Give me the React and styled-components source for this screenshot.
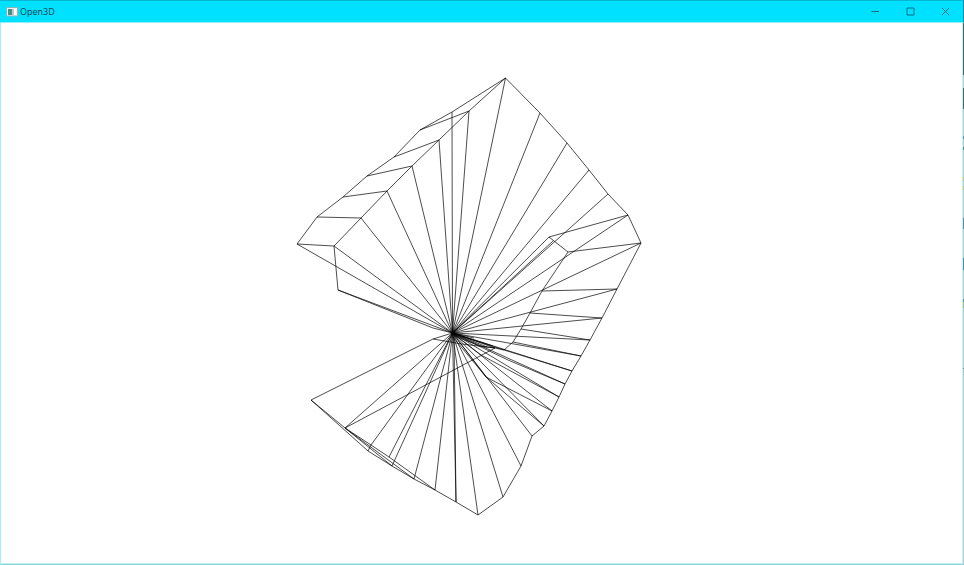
import React from "react";
import styled, { createGlobalStyle } from "styled-components";

const GlobalStyle = createGlobalStyle`
  *, *::before, *::after { box-sizing: border-box; }
  html, body, #root { height: 100%; margin: 0; }
  body { background: #ffffff; font-family: "Open Sans", "Noto Sans", sans-serif; }
`;

const Window = styled.div`
  display: flex;
  flex-direction: column;
  height: 100vh;
  overflow: hidden;
`;

const TitleBar = styled.header`
  display: flex;
  align-items: center;
  justify-content: space-between;
  flex: none;
  height: 23px;
  padding-left: 6px;
  background: #00e1ff;
  border-top: 1px solid #08b8d0;
  border-bottom: 1px solid #8ceffc;
  border-right: 1px solid #087c8c;
`;

const Caption = styled.div`
  display: flex;
  align-items: center;
  gap: 2px;
`;

const Title = styled.h1`
  margin: 0;
  font-size: 9px;
  font-weight: 400;
  line-height: 12px;
  color: #06424c;
`;

const Controls = styled.div`
  display: flex;
  align-self: stretch;
`;

const ControlButton = styled.button`
  display: flex;
  align-items: center;
  justify-content: center;
  width: 35px;
  padding: 0;
  border: 0;
  background: transparent;
  color: #086573;

  &:hover { background: ${(p) => (p.$danger ? "#e81123" : "#00c8e4")}; }
`;

const Body = styled.div`
  display: flex;
  flex: 1;
  min-height: 0;
  border-left: 1px solid #a9edf5;
  border-bottom: 1px solid #8dd0da;
`;

const Viewport = styled.main`
  flex: 1;
  min-width: 0;
  background: #ffffff;
  border-right: 1px solid #c4f1f6;
  border-bottom: 1px solid #c4f1f6;
`;

const RightEdge = styled.div`
  flex: none;
  width: 1px;
  background: linear-gradient(
    #356b70 0 52px, #a4d5da 52px 65px, #376e72 65px 86px, #a4d5da 86px 113px,
    #4b9bbb 113px 116px, #a4d5da 116px 124px, #3b9a92 124px 127px, #a4d5da 127px 154px,
    #b5cf6c 154px 158px, #a4d5da 158px 163px, #b5cf6c 163px 167px, #a4d5da 167px 195px,
    #4690ad 195px 206px, #a4d5da 206px 235px, #3d8db1 235px 247px, #a4d5da 247px 276px,
    #4b9bbb 276px 279px, #9bc475 279px 285px, #a4d5da 285px 345px, #5d8f94 345px 346px, #a4d5da 346px
  );
`;

const Scene = styled.svg`
  display: block;
  width: 100%;
  height: 100%;
  fill: none;
  stroke: #000000;
  stroke-width: 0.7;
  stroke-linejoin: round;
`;

const HUB = [452.5, 333];

const OUTLINES = [
  "297,244 317,217 343,197 367,176 394,157 420,130 452,112 505.5,78",
  "505.5,78 540,113 567,143 589,170 608,194 628,215 641,243 617,289 602,318 590,340 581,356 572,371 565,384 559,397 552,411 544,426 532,436 521,466 503,497 478,515 456,502 435,490",
  "505.5,78 469,111 439,140 412,166 387,191 361,218 334,246 338,290",
  "549,237 568,252 542,291 530,313 521,329 513,342 504,350 495,348",
  "435,490 414,479 392,466 368,451 311,400 345,428",
  "345,428 371,445 389,457 435,490",
  "345,428 392,466",
  "345,428 414,479",
  "345,428 495,348",
  "368,451 371,445",
  "311,400 433,339 452.5,333",
  "433,339 462,344 495,348",
];

const RUNGS = [
  "420,130 469,111",
  "394,157 439,140",
  "367,176 412,166",
  "343,197 387,191",
  "317,217 361,218",
  "297,244 334,246",
  "628,215 549,237",
  "641,243 568,252",
  "617,289 542,291",
  "602,318 530,313",
  "590,340 521,329",
  "581,356 513,342",
  "572,371 504,350",
  "559,397 481,355",
  "552,411 486,377",
  "338,290 433,328 452.5,333",
];

const SPOKES = [
  [297, 244], [334, 246], [338, 290], [361, 218], [387, 191],
  [412, 166], [439, 140], [452, 112], [469, 111], [505.5, 78], [540, 113],
  [567, 143], [589, 170], [608, 194], [549, 237], [553, 241],
  [628, 215], [641, 243], [617, 289], [602, 318], [590, 340], [581, 356],
  [572, 371], [565, 384], [559, 397], [552, 411], [544, 426],
  [532, 436], [521, 466], [503, 497], [478, 515], [456, 502],
  [435, 490], [414, 479], [392, 466], [389, 457],
  [371, 445], [345, 428], [504, 350], [495, 348], [493, 346],
  [487, 347], [481, 355], [486, 377], [474, 338],
];

const OFFSET_SPOKES = [
  "454,333 456,502",
  "455,336 480,346 495,348",
  "456,335 508,360 565,384",
  "453,337 486,377 544,426",
];

const AppIcon = () => (
  <svg width="12" height="10" viewBox="0 0 12 10" aria-hidden="true">
    <rect x="0.5" y="0.5" width="11" height="8.5" fill="#f0f3f2" stroke="#86b9bd" />
    <rect x="2" y="2" width="4" height="6" fill="#4b8d82" />
    <rect x="6" y="2" width="2" height="6" fill="#b9c9c7" />
    <rect x="8" y="2" width="2" height="6" fill="#ffffff" />
  </svg>
);

const controls = [
  { label: "Minimize", d: "M0.5 4.5H8" },
  { label: "Maximize", d: "M1 1H8V8H1Z" },
  { label: "Close", d: "M1 1L8 8M8 1L1 8", danger: true },
];

const WireMesh = () => (
  <Scene viewBox="1 23 961 540" role="img" aria-label="Wireframe mesh">
    {[...OUTLINES, ...RUNGS, ...OFFSET_SPOKES].map((points) => (
      <polyline key={points} points={points} />
    ))}
    {SPOKES.map(([x, y]) => (
      <line key={`${x},${y}`} x1={HUB[0]} y1={HUB[1]} x2={x} y2={y} />
    ))}
  </Scene>
);

export default function App() {
  return (
    <>
      <GlobalStyle />
      <Window>
        <TitleBar>
          <Caption>
            <AppIcon />
            <Title>Open3D</Title>
          </Caption>
          <Controls>
            {controls.map(({ label, d, danger }) => (
              <ControlButton key={label} type="button" aria-label={label} $danger={danger}>
                <svg width="9" height="9" viewBox="0 0 9 9" fill="none" stroke="currentColor" strokeWidth="0.9" aria-hidden="true">
                  <path d={d} />
                </svg>
              </ControlButton>
            ))}
          </Controls>
        </TitleBar>
        <Body>
          <Viewport>
            <WireMesh />
          </Viewport>
          <RightEdge />
        </Body>
      </Window>
    </>
  );
}
